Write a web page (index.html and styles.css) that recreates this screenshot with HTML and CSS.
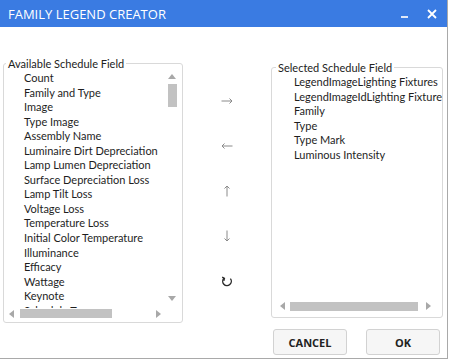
FILE: index.html
```html
<!DOCTYPE html>
<html lang="en">
<head>
	<meta charset="UTF-8">
	<title>Family Legend Creator</title>
	<link rel="stylesheet" href="styles.css">
</head>
<body>
	<div class="window">
		<div class="titlebar">
			<span class="title">FAMILY LEGEND CREATOR</span>
			<span class="min"></span>
			<svg class="close" width="10" height="10" viewBox="0 0 10 10"><path d="M1 1l8 8M9 1l-8 8" stroke="#fff" stroke-width="1.8"/></svg>
		</div>

		<div class="panes">
			<fieldset class="group left">
				<legend>Available Schedule Field</legend>
				<div class="listrow">
					<ul class="items">
						<li>Count</li>
						<li>Family and Type</li>
						<li>Image</li>
						<li>Type Image</li>
						<li>Assembly Name</li>
						<li>Luminaire Dirt Depreciation</li>
						<li>Lamp Lumen Depreciation</li>
						<li>Surface Depreciation Loss</li>
						<li>Lamp Tilt Loss</li>
						<li>Voltage Loss</li>
						<li>Temperature Loss</li>
						<li>Initial Color Temperature</li>
						<li>Illuminance</li>
						<li>Efficacy</li>
						<li>Wattage</li>
						<li>Keynote</li>
						<li>Schedule Type</li>
					</ul>
					<div class="vscroll">
						<span class="tri up"></span>
						<span class="vthumb"></span>
						<span class="tri down"></span>
					</div>
				</div>
				<div class="hscroll">
					<span class="tri lt"></span>
					<span class="hthumb"></span>
					<span class="tri rt"></span>
				</div>
			</fieldset>

			<div class="movers">
				<svg width="12" height="12" viewBox="0 0 12 12"><path d="M0.5 6h10.5M8.5 3.5l2.5 2.5-2.5 2.5" stroke="#8a8a8a" fill="none"/></svg>
				<svg width="12" height="12" viewBox="0 0 12 12"><path d="M11.5 6h-10.5M3.5 3.5l-2.5 2.5 2.5 2.5" stroke="#8a8a8a" fill="none"/></svg>
				<svg width="12" height="12" viewBox="0 0 12 12"><path d="M6 11.5v-10.5M3.5 3.5l2.5-2.5 2.5 2.5" stroke="#8a8a8a" fill="none"/></svg>
				<svg width="12" height="12" viewBox="0 0 12 12"><path d="M6 0.5v10.5M3.5 8.5l2.5 2.5 2.5-2.5" stroke="#8a8a8a" fill="none"/></svg>
				<svg width="12" height="12" viewBox="0 0 12 12"><path d="M3 3.2A4.3 4.3 0 1 0 9.4 3.6" stroke="#2a2a2a" stroke-width="1.4" fill="none"/><path d="M1.2 2.2l2.2 1.2-0.6 2.4" stroke="#2a2a2a" stroke-width="1.4" fill="none"/></svg>
			</div>

			<fieldset class="group right">
				<legend>Selected Schedule Field</legend>
				<ul class="items">
					<li>LegendImageLighting Fixtures</li>
					<li>LegendImageIdLighting Fixtures</li>
					<li>Family</li>
					<li>Type</li>
					<li>Type Mark</li>
					<li>Luminous Intensity</li>
				</ul>
				<div class="hscroll">
					<span class="tri lt"></span>
					<span class="hthumb"></span>
					<span class="tri rt"></span>
				</div>
			</fieldset>
		</div>

		<div class="actions">
			<button class="btn">CANCEL</button>
			<button class="btn">OK</button>
		</div>
	</div>
</body>
</html>
```

FILE: styles.css
```css
* {
	margin: 0;
	padding: 0;
	box-sizing: border-box;
}

body {
	background: #fff;
	font-family: Lato, "Open Sans", sans-serif;
	font-size: 11px;
	color: #1e1e1e;
}

.window {
	width: 448px;
	height: 359px;
	border-right: 1px solid #a9a9a9;
	border-bottom: 1px solid #a9a9a9;
	display: flex;
	flex-direction: column;
}

.titlebar {
	height: 27px;
	background: #3a7be2;
	display: flex;
	align-items: center;
	padding-left: 8px;
	color: #fff;
}

.title {
	font-family: "Open Sans", sans-serif;
	font-size: 13px;
	flex: 1;
}

.min {
	width: 7px;
	height: 2px;
	background: #dfe8f8;
	margin-top: 7px;
	margin-right: 19px;
}

.close {
	margin-right: 10px;
}

.panes {
	height: 296px;
	display: flex;
	align-items: flex-start;
	padding-top: 29px;
}

.group {
	border: 1px solid #d9d9d9;
	border-radius: 3px;
	min-width: 0;
}

.group legend {
	line-height: 15px;
	padding: 0 2px;
	color: #222;
}

.left {
	width: 180px;
	margin-left: 3px;
	padding-bottom: 1px;
}

.left legend {
	margin-left: 2px;
}

.right {
	width: 172px;
	margin-top: 4px;
	padding-bottom: 4px;
}

.right legend {
	margin-left: 4px;
}

.listrow {
	display: flex;
	height: 237px;
}

.items {
	list-style: none;
	flex: 1;
	overflow: hidden;
	white-space: nowrap;
	padding-left: 20px;
}

.right .items {
	height: 224px;
	padding-left: 22px;
}

.items li {
	line-height: 14.55px;
}

.vscroll {
	width: 14px;
	margin-right: 3px;
	display: flex;
	flex-direction: column;
	align-items: center;
	padding: 3px 0 7px;
}

.vthumb {
	width: 9px;
	height: 23px;
	background: #c2c2c2;
	margin-top: 5px;
}

.vscroll .down {
	margin-top: auto;
}

.hscroll {
	height: 14px;
	display: flex;
	align-items: center;
	padding: 0 21px 0 5px;
}

.left .hscroll {
	margin-top: -1px;
	padding-bottom: 1px;
}

.right .hscroll {
	padding: 0 11px 0 8px;
}

.hthumb {
	width: 92px;
	height: 9px;
	background: #c2c2c2;
	margin-left: 6px;
}

.right .hthumb {
	width: 128px;
	margin-left: 5px;
}

.hscroll .rt {
	margin-left: auto;
}

.tri {
	width: 0;
	height: 0;
	border: 0 solid transparent;
}

.tri.up {
	border-width: 0 4px 5px;
	border-bottom-color: #a8a8a8;
}

.tri.down {
	border-width: 5px 4px 0;
	border-top-color: #a8a8a8;
}

.tri.lt {
	border-width: 4px 5px 4px 0;
	border-right-color: #a8a8a8;
}

.tri.rt {
	border-width: 4px 0 4px 5px;
	border-left-color: #a8a8a8;
}

.movers {
	width: 88px;
	display: flex;
	flex-direction: column;
	align-items: center;
	gap: 33px;
	padding-top: 39px;
}

.movers svg {
	display: block;
}

.actions {
	display: flex;
	justify-content: flex-end;
	gap: 19px;
	padding: 6px 7px 0 0;
}

.btn {
	width: 74px;
	height: 26px;
	background: #f6f6f6;
	border: 1px solid #d2d2d2;
	border-radius: 3px;
	font-family: "Open Sans", sans-serif;
	font-size: 11px;
	font-weight: bold;
	color: #222;
}
```
